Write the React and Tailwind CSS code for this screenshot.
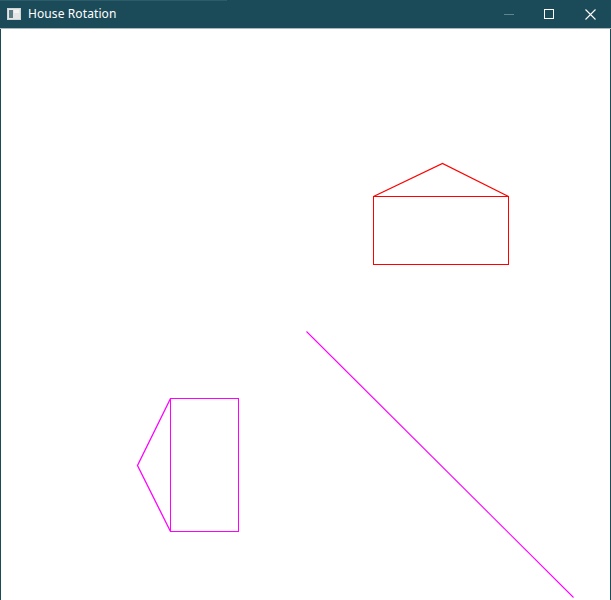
import React from "react";

const TitleBar = () => (
  <div className="relative h-[28px] bg-[#1b4a59] flex items-center text-white">
    <div className="absolute left-0 top-0 h-px w-[227px] bg-[#2c5c6a]" />
    <svg width="14" height="12" viewBox="0 0 14 12" className="ml-[7px]">
      <rect x="0.5" y="0.5" width="13" height="11" fill="#e6e6e6" stroke="#cfd6d8" />
      <rect x="2" y="2" width="4" height="8" fill="#5a7d86" />
      <rect x="7" y="2" width="5" height="3" fill="#f4f4f4" />
    </svg>
    <span className="ml-[7px] text-[12px] leading-none font-['Noto_Sans','Open_Sans',sans-serif] tracking-[0.1px]">
      House Rotation
    </span>
    <div className="ml-auto flex items-center h-full">
      <div className="w-[40px] h-full flex items-center justify-center">
        <div className="w-[10px] h-px bg-[#5f8591]" />
      </div>
      <div className="w-[40px] h-full flex items-center justify-center">
        <div className="w-[10px] h-[10px] border border-white" />
      </div>
      <div className="w-[42px] h-full flex items-center justify-center">
        <svg width="11" height="11" viewBox="0 0 11 11">
          <path d="M0.5 0.5 L10.5 10.5 M10.5 0.5 L0.5 10.5" stroke="white" strokeWidth="1.1" />
        </svg>
      </div>
    </div>
  </div>
);

const Scene = () => (
  <svg width="609" height="571" className="block">
    <g fill="none" stroke="#ff0000" strokeWidth="1.3">
      <rect x="372.5" y="167.5" width="135" height="68" shapeRendering="crispEdges" />
      <polyline points="372.5,167.5 441.5,134.5 507.5,167.5" />
    </g>
    <g fill="none" stroke="#ff00ff" strokeWidth="1.3">
      <rect x="169.5" y="369.5" width="68" height="133" shapeRendering="crispEdges" />
      <polyline points="169.5,369.5 136.5,436.5 169.5,502.5" />
      <line x1="305.5" y1="302.5" x2="572.5" y2="568.5" strokeWidth="1.1" />
    </g>
  </svg>
);

const App = () => {
  return (
    <div className="w-[611px] h-[600px] overflow-hidden flex flex-col bg-white">
      <TitleBar />
      <div className="h-px bg-[#a9b8bd]" />
      <div className="flex-1 flex border-x border-[#1b4a59] bg-white">
        <Scene />
      </div>
    </div>
  );
};

export default App;
